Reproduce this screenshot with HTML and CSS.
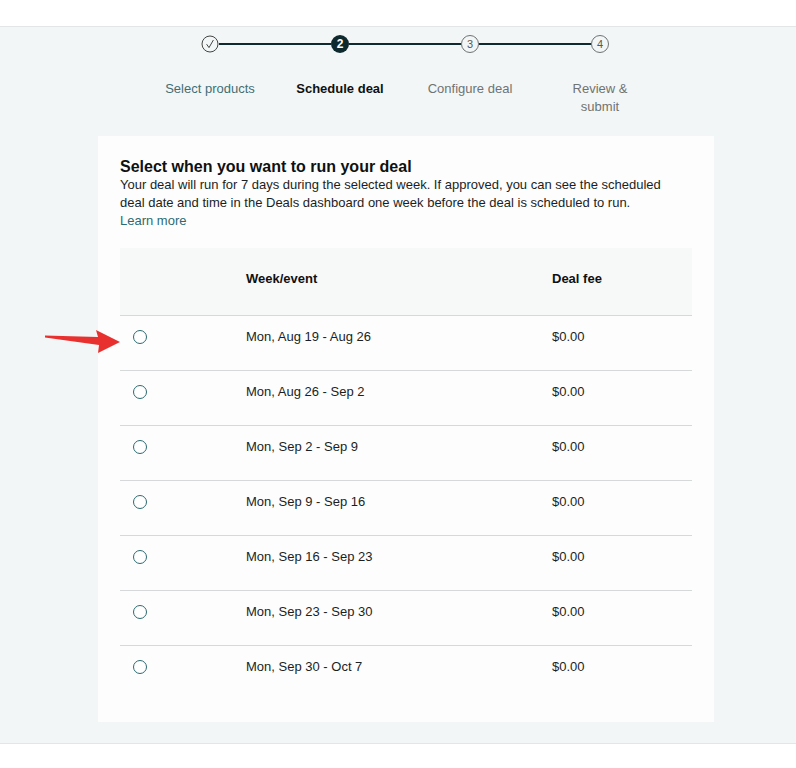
FILE: index.html
```html
<!DOCTYPE html>
<html>
<head>
<meta charset="utf-8">
<link rel="stylesheet" href="styles.css">
</head>
<body>
<div class="topbar"></div>
<main class="main">
  <div class="track">
    <div class="step done"><svg viewBox="0 0 18 18" width="18" height="18"><circle cx="9" cy="9" r="8" fill="none" stroke="#444" stroke-width="1"/><path d="M5.6 9.2 L8 12.6 L12.4 5" fill="none" stroke="#444" stroke-width="1"/></svg></div>
    <div class="line"></div>
    <div class="step current">2</div>
    <div class="line"></div>
    <div class="step todo">3</div>
    <div class="line"></div>
    <div class="step todo">4</div>
  </div>
  <div class="labels">
    <div class="label visited">Select products</div>
    <div class="label active">Schedule deal</div>
    <div class="label pending">Configure deal</div>
    <div class="label pending">Review &amp;<br>submit</div>
  </div>

  <section class="card">
    <h2 class="title">Select when you want to run your deal</h2>
    <p class="desc">Your deal will run for 7 days during the selected week. If approved, you can see the scheduled deal date and time in the Deals dashboard one week before the deal is scheduled to run.</p>
    <a class="link">Learn more</a>

    <div class="table">
      <div class="row head">
        <div class="cell"></div>
        <div class="cell">Week/event</div>
        <div class="cell">Deal fee</div>
      </div>
      <div class="row"><div class="cell"><span class="radio"></span></div><div class="cell">Mon, Aug 19 - Aug 26</div><div class="cell">$0.00</div></div>
      <div class="row"><div class="cell"><span class="radio"></span></div><div class="cell">Mon, Aug 26 - Sep 2</div><div class="cell">$0.00</div></div>
      <div class="row"><div class="cell"><span class="radio"></span></div><div class="cell">Mon, Sep 2 - Sep 9</div><div class="cell">$0.00</div></div>
      <div class="row"><div class="cell"><span class="radio"></span></div><div class="cell">Mon, Sep 9 - Sep 16</div><div class="cell">$0.00</div></div>
      <div class="row"><div class="cell"><span class="radio"></span></div><div class="cell">Mon, Sep 16 - Sep 23</div><div class="cell">$0.00</div></div>
      <div class="row"><div class="cell"><span class="radio"></span></div><div class="cell">Mon, Sep 23 - Sep 30</div><div class="cell">$0.00</div></div>
      <div class="row"><div class="cell"><span class="radio"></span></div><div class="cell">Mon, Sep 30 - Oct 7</div><div class="cell">$0.00</div></div>
    </div>
  </section>
</main>
<div class="bottom"></div>

<svg class="arrow" viewBox="0 0 80 28" width="80" height="28">
  <path d="M1 7.5 L54 9 L52 2 L76 14 L54 25 L55 17 L1 9.5 Z" fill="#e8312f"/>
</svg>
</body>
</html>
```
FILE: styles.css
```css
* { box-sizing: border-box; }
body {
  margin: 0;
  font-family: "Liberation Sans", Arial, sans-serif;
  color: #0f1111;
  background: #ffffff;
  position: relative;
}
.topbar {
  height: 27px;
  background: #ffffff;
  border-bottom: 1px solid #e2e6e6;
}
.main {
  background: #f3f6f6;
  padding: 8px 0 21px;
  border-bottom: 1px solid #e2e6e6;
}
.track {
  display: flex;
  align-items: center;
  margin-left: 201px;
  width: 408px;
  height: 18px;
}
.line {
  flex: 1;
  height: 2px;
  background: #0f2a2e;
}
.step {
  width: 18px;
  height: 18px;
  border-radius: 50%;
  display: flex;
  align-items: center;
  justify-content: center;
  font-size: 11px;
  line-height: 1;
}
.step svg { display: block; }
.step.current {
  background: #0f2a2e;
  color: #ffffff;
  font-weight: bold;
  font-size: 12px;
}
.step.todo {
  border: 1px solid #6f7373;
  color: #565959;
  background: #f3f6f6;
}
.labels {
  display: grid;
  grid-template-columns: repeat(4, 130px);
  margin-left: 145px;
  margin-top: 27px;
}
.label {
  text-align: center;
  font-size: 13px;
  line-height: 18px;
}
.label.visited { color: #3f6f75; }
.label.active { color: #0f1111; font-weight: bold; }
.label.pending { color: #6f7373; }

.card {
  margin: 20px 0 0 98px;
  width: 616px;
  background: #fdfdfd;
  padding: 22px 22px 22px;
}
.title {
  margin: 0;
  font-size: 16px;
  line-height: 18px;
  font-weight: bold;
  color: #0f1111;
}
.desc {
  margin: 0;
  max-width: 556px;
  font-size: 13px;
  line-height: 18px;
  color: #1b1f1f;
}
.link {
  display: block;
  font-size: 13px;
  line-height: 18px;
  color: #2e6a70;
}
.table {
  margin-top: 18px;
}
.row {
  display: grid;
  grid-template-columns: 126px 306px 1fr;
  height: 55px;
  border-top: 1px solid #d5d9d9;
  font-size: 13px;
  line-height: 18px;
  color: #1b1f1f;
}
.row .cell {
  padding-top: 12px;
}
.row.head {
  height: 67px;
  border-top: none;
  background: #f7f8f8;
  font-weight: bold;
  color: #0f1111;
}
.row.head .cell { padding-top: 22px; }
.row .cell:first-child { padding-left: 13px; }
.radio {
  display: inline-block;
  width: 14px;
  height: 14px;
  border: 1px solid #2b6b70;
  border-radius: 50%;
  vertical-align: top;
  margin-top: 2px;
  background: #ffffff;
}
.bottom {
  height: 24px;
}
.arrow {
  position: absolute;
  left: 44px;
  top: 328px;
}
```
